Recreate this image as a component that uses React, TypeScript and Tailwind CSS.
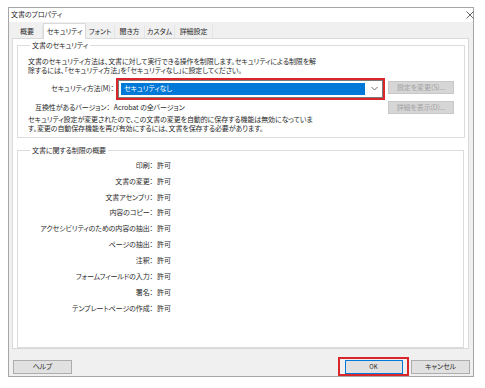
import React from "react";

const rows: [string, string][] = [
  ["印刷：", "許可"],
  ["文書の変更：", "許可"],
  ["文書アセンブリ：", "許可"],
  ["内容のコピー：", "許可"],
  ["アクセシビリティのための内容の抽出：", "許可"],
  ["ページの抽出：", "許可"],
  ["注釈：", "許可"],
  ["フォームフィールドの入力：", "許可"],
  ["署名：", "許可"],
  ["テンプレートページの作成：", "許可"],
];

const tabs: { label: string; w: string; active?: boolean }[] = [
  { label: "概要", w: "w-[31px]" },
  { label: "セキュリティ", w: "w-[43px]", active: true },
  { label: "フォント", w: "w-[29px]" },
  { label: "聞き方", w: "w-[30px]" },
  { label: "カスタム", w: "w-[30px]" },
  { label: "詳細設定", w: "w-[38px]" },
];

export default function App() {
  return (
    <div className="w-[485px] h-[388px] bg-white pt-[7px] pl-[8px] font-['Noto_Sans_CJK_JP','Noto_Sans',sans-serif] [font-feature-settings:'palt'] text-[7px] tracking-[-0.1px] leading-[9px] text-[#2b2b2b] overflow-hidden">
      <div className="w-[466px] h-[370px] border border-[#a6a6a6] bg-[#f0f0f0] flex flex-col">
        {/* title bar */}
        <div className="h-[14px] bg-white flex items-center justify-between pl-[2px]">
          <span>文書のプロパティ</span>
          <svg width="8" height="8" viewBox="0 0 8 8" className="-mr-[1px]">
            <path d="M0.5 0.5 L7.5 7.5 M7.5 0.5 L0.5 7.5" stroke="#555" strokeWidth="0.9" />
          </svg>
        </div>
        {/* tabs */}
        <div className="flex items-end h-[16px] pl-[3px]">
          {tabs.map((t) =>
            t.active ? (
              <div
                key={t.label}
                className={`${t.w} h-[16px] bg-white border border-b-0 border-[#d9d9d9] flex items-center justify-center -mb-px relative z-10`}
              >
                {t.label}
              </div>
            ) : (
              <div
                key={t.label}
                className={`${t.w} h-[13px] flex items-center justify-center border-r border-[#e4e4e4]`}
              >
                {t.label}
              </div>
            )
          )}
        </div>
        {/* panel */}
        <div className="ml-[3px] w-[457px] h-[314px] bg-white border border-[#d9d9d9] px-[4px] pt-[2px]">
          <fieldset className="border border-[#dcdcdc] h-[97px] px-[10px]">
            <legend className="ml-[2px] px-[2px]">文書のセキュリティ</legend>
            <div className="mt-[7px]">
              <p>文書のセキュリティ方法は、文書に対して実行できる操作を制限します。セキュリティによる制限を解</p>
              <p>除するには、「セキュリティ方法」を「セキュリティなし」に設定してください。</p>
            </div>
            <div className="flex items-start mt-[3px]">
              <div className="flex flex-col">
                <div className="flex items-center">
                  <span className="w-[86px] text-right">セキュリティ方法(M)：</span>
                  <div className="ml-[2px] w-[269px] h-[22px] border-2 border-[#d9262b]">
                    <div className="w-full h-full border border-[#7a7a7a] bg-white flex items-center pl-[2px] pr-[4px]">
                      <div className="flex-1 h-[12px] bg-[#0078d7] text-white flex items-center pl-[3px]">
                        セキュリティなし
                      </div>
                      <svg width="7" height="5" viewBox="0 0 7 5" className="ml-[6px]">
                        <path d="M0.5 1 L3.5 4 L6.5 1" stroke="#606060" strokeWidth="0.9" fill="none" />
                      </svg>
                    </div>
                  </div>
                </div>
                <div className="flex items-center mt-[3px] pl-[7px]">
                  <span>互換性があるバージョン：</span>
                  <span className="ml-[4px]">Acrobat の全バージョン</span>
                </div>
              </div>
              <div className="flex flex-col ml-[3px] mt-[3px] gap-[7px]">
                <div className="w-[66px] h-[13px] bg-[#d6d6d6] border border-[#c8c8c8] text-[#a3a3a3] flex items-center justify-center">
                  設定を変更(S)...
                </div>
                <div className="w-[66px] h-[13px] bg-[#d6d6d6] border border-[#c8c8c8] text-[#a3a3a3] flex items-center justify-center">
                  詳細を表示(D)...
                </div>
              </div>
            </div>
            <div className="mt-[1px]">
              <p>セキュリティ設定が変更されたので、この文書の変更を自動的に保存する機能は無効になっていま</p>
              <p>す。変更の自動保存機能を再び有効にするには、文書を保存する必要があります。</p>
            </div>
          </fieldset>
          <fieldset className="border border-[#dcdcdc] h-[202px] mt-[8px] px-[10px]">
            <legend className="ml-[2px] px-[2px]">文書に関する制限の概要</legend>
            <div className="flex flex-col mt-[6px] gap-[6.9px]">
              {rows.map(([k, v]) => (
                <div key={k} className="flex">
                  <span className="w-[125px] text-right">{k}</span>
                  <span className="ml-[4px]">{v}</span>
                </div>
              ))}
            </div>
          </fieldset>
        </div>
        {/* bottom buttons */}
        <div className="flex items-center justify-between mt-[8px] pl-[4px] pr-[3px]">
          <div className="w-[59px] h-[14px] bg-[#e1e1e1] border border-[#adadad] flex items-center justify-center">
            ヘルプ
          </div>
          <div className="flex items-center">
            <div className="w-[71px] h-[19px] border-2 border-[#d9262b] flex items-center justify-center">
              <div className="w-[58px] h-[14px] bg-[#e1e1e1] border border-[#0078d7] flex items-center justify-center text-[6px] tracking-normal">
                OK
              </div>
            </div>
            <div className="ml-[2px] w-[59px] h-[14px] bg-[#e1e1e1] border border-[#adadad] flex items-center justify-center">
              キャンセル
            </div>
          </div>
        </div>
      </div>
    </div>
  );
}
